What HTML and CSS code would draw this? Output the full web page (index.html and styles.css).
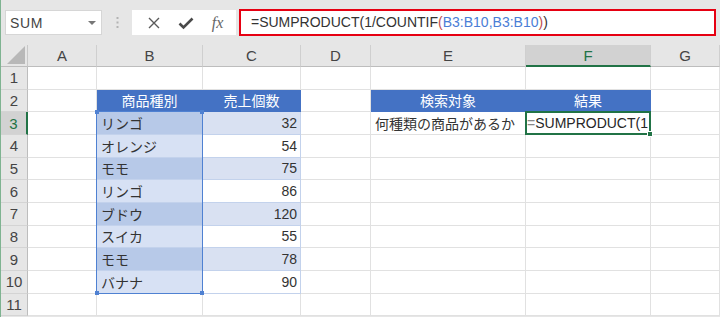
FILE: index.html
```html
<!DOCTYPE html>
<html lang="ja">
<head>
  <meta charset="UTF-8" />
  <title>SUMPRODUCT</title>
  <link rel="stylesheet" href="styles.css">
</head>
<body>
  <div class="window">
    <!-- formula bar -->
    <div class="formula-bar">
      <div class="name-box">
        <span>SUM</span>
        <svg class="caret" width="8" height="4" viewBox="0 0 8 4"><path d="M0 0h8L4 4z" fill="#777"/></svg>
      </div>
      <div class="grip">
        <svg width="3" height="11" viewBox="0 0 3 11"><rect x="0.5" y="0" width="2" height="2" fill="#b3b3b3"/><rect x="0.5" y="4.5" width="2" height="2" fill="#b3b3b3"/><rect x="0.5" y="9" width="2" height="2" fill="#b3b3b3"/></svg>
      </div>
      <div class="fx-buttons">
        <svg width="14" height="14" viewBox="0 0 14 14"><path d="M2 2l10 10M12 2L2 12" stroke="#5a5a5a" stroke-width="1.4" fill="none"/></svg>
        <svg width="16" height="14" viewBox="0 0 16 14"><path d="M1.5 7.5l4 4L14.5 2.5" stroke="#4a4a4a" stroke-width="2.6" fill="none"/></svg>
        <span class="fx">fx</span>
      </div>
      <div class="formula-input">=SUMPRODUCT(1/COUNTIF<span class="paren">(</span><span class="ref">B3:B10,B3:B10</span><span class="paren">)</span>)</div>
    </div>

    <!-- sheet -->
    <div class="sheet">
      <div class="grid cells">
        <div class="corner"><svg width="18" height="18" viewBox="0 0 18 18"><path d="M18 0V18H0z" fill="#b8b8b8"/></svg></div>
        <div class="ch">A</div><div class="ch">B</div><div class="ch">C</div><div class="ch">D</div><div class="ch">E</div><div class="ch active">F</div><div class="ch">G</div>

        <div class="rh">1</div><div class="c"></div><div class="c"></div><div class="c"></div><div class="c"></div><div class="c"></div><div class="c"></div><div class="c"></div>

        <div class="rh">2</div><div class="c"></div><div class="c hd">商品種別</div><div class="c hd">売上個数</div><div class="c"></div><div class="c hd">検索対象</div><div class="c hd">結果</div><div class="c"></div>

        <div class="rh active">3</div><div class="c"></div><div class="c tb sel-band">リンゴ</div><div class="c tb band num">32</div><div class="c"></div><div class="c">何種類の商品があるか</div><div class="c formula"><span class="eq">=</span>SUMPRODUCT(1</div><div class="c"></div>

        <div class="rh">4</div><div class="c"></div><div class="c tb sel">オレンジ</div><div class="c tb num">54</div><div class="c"></div><div class="c"></div><div class="c"></div><div class="c"></div>

        <div class="rh">5</div><div class="c"></div><div class="c tb sel-band">モモ</div><div class="c tb band num">75</div><div class="c"></div><div class="c"></div><div class="c"></div><div class="c"></div>

        <div class="rh">6</div><div class="c"></div><div class="c tb sel">リンゴ</div><div class="c tb num">86</div><div class="c"></div><div class="c"></div><div class="c"></div><div class="c"></div>

        <div class="rh">7</div><div class="c"></div><div class="c tb sel-band">ブドウ</div><div class="c tb band num">120</div><div class="c"></div><div class="c"></div><div class="c"></div><div class="c"></div>

        <div class="rh">8</div><div class="c"></div><div class="c tb sel">スイカ</div><div class="c tb num">55</div><div class="c"></div><div class="c"></div><div class="c"></div><div class="c"></div>

        <div class="rh">9</div><div class="c"></div><div class="c tb sel-band">モモ</div><div class="c tb band num">78</div><div class="c"></div><div class="c"></div><div class="c"></div><div class="c"></div>

        <div class="rh">10</div><div class="c"></div><div class="c tb sel">バナナ</div><div class="c tb num">90</div><div class="c"></div><div class="c"></div><div class="c"></div><div class="c"></div>

        <div class="rh">11</div><div class="c"></div><div class="c"></div><div class="c"></div><div class="c"></div><div class="c"></div><div class="c"></div><div class="c"></div>
      </div>

      <!-- selection layer, same grid -->
      <div class="grid marks">
        <div class="range">
          <i class="h tl"></i><i class="h tr"></i><i class="h bl"></i><i class="h br"></i>
        </div>
        <div class="cursor"><i class="fill"></i></div>
      </div>
    </div>
  </div>
</body>
</html>
```

FILE: styles.css
```css
* {
  box-sizing: border-box;
}

body {
  margin: 0;
  background: #fff;
  font-family: "Liberation Sans", "Noto Sans CJK JP", sans-serif;
  color: #262626;
}

.window {
  width: 720px;
  height: 317px;
  overflow: hidden;
  border-left: 1px solid #7fb391;
  background: #e6e6e6;
}

/* ---- formula bar ---- */
.formula-bar {
  display: flex;
  align-items: center;
  height: 45px;
  padding: 0 4px 0 4px;
}

.name-box {
  display: flex;
  align-items: center;
  justify-content: space-between;
  width: 97px;
  height: 25px;
  padding: 0 5px 0 4px;
  background: #fff;
  border: 1px solid #d6d6d6;
  font-size: 14px;
  letter-spacing: 0.6px;
  color: #444;
}

.grip {
  display: flex;
  width: 30px;
  justify-content: center;
}

.fx-buttons {
  display: flex;
  align-items: center;
  justify-content: space-around;
  width: 104px;
  height: 25px;
  padding: 0 4px 0 6px;
  background: #fff;
}

.fx {
  font-family: "Liberation Serif", serif;
  font-style: italic;
  font-size: 16px;
  color: #666;
}

.formula-input {
  flex: 1;
  height: 27px;
  margin-left: 3px;
  padding: 0 10px;
  line-height: 23px;
  background: #fff;
  border: 2px solid #e60012;
  font-size: 14px;
  color: #333;
  white-space: nowrap;
}

.formula-input .paren {
  color: #c0504d;
}

.formula-input .ref {
  color: #4a7ed6;
}

/* ---- sheet ---- */
.sheet {
  display: grid;
  background: #fff;
}

.grid {
  grid-area: 1 / 1;
  display: grid;
  grid-template-columns: 27px 69px 106px 98px 70px 155px 125px 1fr;
  grid-template-rows: 22px repeat(11, 22.67px);
}

.corner {
  display: flex;
  align-items: flex-end;
  justify-content: flex-end;
  padding: 0 2px 2px 0;
  background: #e6e6e6;
  border-right: 1px solid #c8c8c8;
  border-bottom: 1px solid #bdbdbd;
}

.ch {
  display: flex;
  align-items: center;
  justify-content: center;
  background: #e6e6e6;
  border-right: 1px solid #cfcfcf;
  border-bottom: 1px solid #bdbdbd;
  font-size: 15px;
  color: #444;
}

.rh {
  display: flex;
  align-items: center;
  justify-content: center;
  background: #e6e6e6;
  border-right: 1px solid #bdbdbd;
  border-bottom: 1px solid #d4d4d4;
  font-size: 15px;
  color: #444;
}

.ch.active {
  background: #d2d2d2;
  color: #217346;
  border-bottom: 2px solid #217346;
}

.rh.active {
  background: #d2d2d2;
  color: #217346;
  border-right: 2px solid #217346;
}

.c {
  display: flex;
  align-items: center;
  padding: 0 4px;
  border-right: 1px solid #e1e1e1;
  border-bottom: 1px solid #e1e1e1;
  font-size: 14px;
  color: #333;
  white-space: nowrap;
  overflow: hidden;
}

.c.hd {
  justify-content: center;
  background: #4472c4;
  border-color: #4472c4;
  color: #fff;
}

.c.tb {
  border-color: #c3d2ec;
}

.c.band {
  background: #d9e1f2;
}

.c.sel {
  background: #d7e1f4;
}

.c.sel-band {
  background: #b7c9e8;
}

.c.num {
  justify-content: flex-end;
  padding-right: 3px;
}

.c.formula {
  padding-left: 1px;
  padding-right: 0;
  font-size: 14px;
  color: #262626;
}

.c.formula .eq {
  color: #888;
}

/* ---- selection marks ---- */
.marks {
  pointer-events: none;
}

.range {
  grid-column: 3;
  grid-row: 4 / 12;
  position: relative;
  margin: -1px 0 0 -1px;
  border: 1px solid #4f81d2;
}

.range .h {
  position: absolute;
  width: 4px;
  height: 4px;
  background: #4f81d2;
}

.range .tl { left: -2px; top: -2px; }
.range .tr { right: -2px; top: -2px; }
.range .bl { left: -2px; bottom: -2px; }
.range .br { right: -2px; bottom: -2px; }

.cursor {
  grid-column: 7;
  grid-row: 4;
  position: relative;
  margin: -1px 0 0 -1px;
  border: 2px solid #217346;
}

.cursor .fill {
  position: absolute;
  right: -4px;
  bottom: -4px;
  width: 6px;
  height: 6px;
  background: #217346;
  border: 1px solid #fff;
}
```
